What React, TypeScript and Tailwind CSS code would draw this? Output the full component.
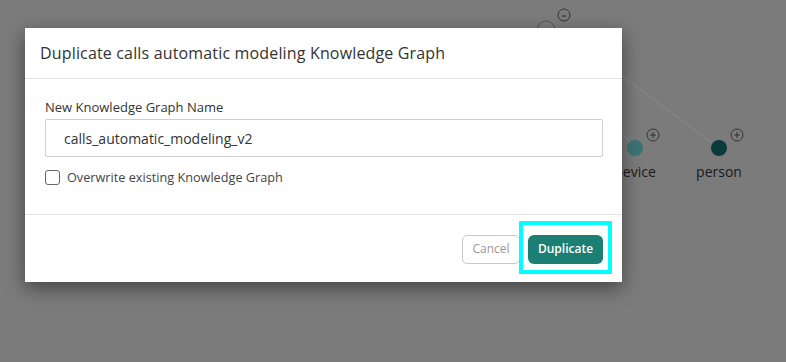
import React from "react";

const font = { fontFamily: '"Open Sans", "Noto Sans", sans-serif' };

function GraphBackdrop() {
  return (
    <svg className="absolute inset-0" width="786" height="362" viewBox="0 0 786 362">
      <line x1="560" y1="30" x2="719" y2="148" stroke="#8a8a8a" strokeWidth="1" />
      <line x1="600" y1="110" x2="635" y2="148" stroke="#8a8a8a" strokeWidth="1" />
      <circle cx="546" cy="30" r="9" fill="none" stroke="#555" strokeWidth="1" />
      <circle cx="564" cy="15" r="6" fill="none" stroke="#333" strokeWidth="1" />
      <line x1="562" y1="16" x2="566" y2="16" stroke="#333" strokeWidth="1.2" />
      <circle cx="635" cy="148" r="8" fill="#3b7572" />
      <circle cx="653" cy="135" r="6" fill="none" stroke="#333" strokeWidth="1" />
      <line x1="650" y1="135" x2="656" y2="135" stroke="#333" strokeWidth="1" />
      <line x1="653" y1="132" x2="653" y2="138" stroke="#333" strokeWidth="1" />
      <circle cx="719" cy="148" r="8" fill="#0b3a3a" />
      <circle cx="737" cy="135" r="6" fill="none" stroke="#333" strokeWidth="1" />
      <line x1="734" y1="135" x2="740" y2="135" stroke="#333" strokeWidth="1" />
      <line x1="737" y1="132" x2="737" y2="138" stroke="#333" strokeWidth="1" />
      <text x="635" y="177" textAnchor="middle" fontSize="14" fill="#1a1a1a" style={font}>device</text>
      <text x="719" y="177" textAnchor="middle" fontSize="14" fill="#1a1a1a" style={font}>person</text>
    </svg>
  );
}

export default function App() {
  return (
    <div className="relative h-[362px] w-[786px] overflow-hidden bg-[#7b7b7c]" style={font}>
      <GraphBackdrop />
      <div className="relative pl-[25px] pt-[28px]">
        <div className="w-[597px] bg-white shadow-[0_6px_18px_rgba(0,0,0,0.45)]">
          <div className="flex h-[51px] items-center border-b border-[#e3e3e3] px-[15px]">
            <h2 className="text-[16px] tracking-[0.16px] text-[#333]">
              Duplicate calls automatic modeling Knowledge Graph
            </h2>
          </div>
          <div className="flex h-[135px] flex-col px-[20px] pt-[19px]">
            <label className="text-[13px] leading-[18px] text-[#333]">New Knowledge Graph Name</label>
            <input
              readOnly
              value="calls_automatic_modeling_v2"
              className="mt-[3px] h-[38px] w-[558px] rounded-[2px] border border-[#cfcfcf] px-[18px] text-[14px] text-[#333] outline-none"
            />
            <label className="mt-[11px] flex items-center gap-[7px] text-[12.7px] text-[#444]">
              <span className="h-[15px] w-[15px] rounded-[3px] border border-[#666]" />
              Overwrite existing Knowledge Graph
            </label>
          </div>
          <div className="flex h-[68px] items-center justify-end gap-[8px] border-t border-[#e3e3e3] px-[19px] pt-[1px]">
            <button className="h-[29px] w-[58px] rounded-[5px] border border-[#c8c8c8] text-[12px] text-[#999]">
              Cancel
            </button>
            <div className="relative">
              <button className="h-[29px] w-[75px] rounded-[6px] bg-[#1b7f74] text-[12px] font-semibold text-white">
                Duplicate
              </button>
              <div className="absolute -bottom-[10px] -left-[9px] -right-[9px] -top-[14px] border-[4px] border-[#00ffff]" />
            </div>
          </div>
        </div>
      </div>
    </div>
  );
}
